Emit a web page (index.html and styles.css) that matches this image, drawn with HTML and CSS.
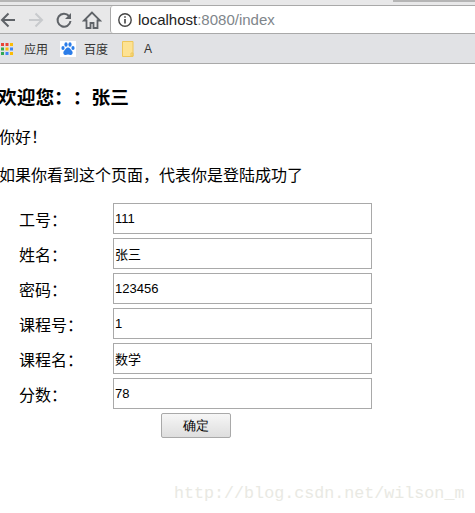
FILE: index.html
```html
<!DOCTYPE html>
<html>
  <head>
    <meta charset="utf-8">
    <title>index</title>
    <link rel="stylesheet" href="styles.css">
  </head>
  <body>
    <div class="browser">
      <div class="tabline"><span class="tab-left"></span><span class="tab-right"></span></div>
      <div class="toolbar">
        <svg class="nav" width="20" height="20" viewBox="0 0 20 20"><path d="M17 10H4M10.500 3.500L4 10l6.500 6.500" fill="none" stroke="#5f6368" stroke-width="2"/></svg>
        <svg class="nav" width="20" height="20" viewBox="0 0 20 20"><path d="M3 10h13M9.500 3.500L16 10l-6.500 6.500" fill="none" stroke="#c8cacd" stroke-width="2"/></svg>
        <svg class="nav" width="20" height="20" viewBox="0 0 20 20"><path d="M15 6A6.500 6.500 0 1 0 16.500 11" fill="none" stroke="#5f6368" stroke-width="2"/><path d="M17 3v6h-6z" fill="#5f6368"/></svg>
        <svg class="nav" width="20" height="20" viewBox="0 0 20 20"><path d="M10 2.500L2 10.500h2.500V18h4v-5h3v5h4v-7.500H18z" fill="none" stroke="#5f6368" stroke-width="1.800"/></svg>
        <div class="omnibox">
          <svg width="16" height="16" viewBox="0 0 16 16"><circle cx="8" cy="8" r="6.200" fill="none" stroke="#444" stroke-width="1.400"/><path d="M8 7v4.500M8 4.300v1.500" stroke="#444" stroke-width="1.600"/></svg>
          <span class="url">localhost<span class="url-dim">:8080/index</span></span>
        </div>
      </div>
      <div class="bookmarks">
        <svg class="apps" width="14" height="14" viewBox="0 0 14 14">
          <path d="M1 1h3v3H1z" fill="#ea4335"/><path d="M5.500 1h3v3h-3z" fill="#ea4335"/><path d="M10 1h3v3h-3z" fill="#fbbc05"/>
          <path d="M1 5.500h3v3H1z" fill="#34a853"/><path d="M5.500 5.500h3v3h-3z" fill="#fbbc05"/><path d="M10 5.500h3v3h-3z" fill="#4285f4"/>
          <path d="M1 10h3v3H1z" fill="#34a853"/><path d="M5.500 10h3v3h-3z" fill="#4285f4"/><path d="M10 10h3v3h-3z" fill="#fbbc05"/>
        </svg>
        <span class="mark mark-apps">应用</span>
        <svg class="baidu" width="16" height="16" viewBox="0 0 16 16">
          <rect width="16" height="16" fill="#fff"/>
          <ellipse cx="3" cy="7" rx="1.600" ry="2" fill="#2b7de9"/><ellipse cx="6" cy="3.500" rx="1.600" ry="2.200" fill="#2b7de9"/><ellipse cx="10" cy="3.500" rx="1.600" ry="2.200" fill="#2b7de9"/><ellipse cx="13" cy="7" rx="1.600" ry="2" fill="#2b7de9"/>
          <path d="M8 6.500c-2 0-2.500 2-4 3.500-1.300 1.500-.5 4 1.500 4 1 0 1.700-.4 2.500-.4s1.500.4 2.500.4c2 0 2.800-2.500 1.500-4C10.500 8.500 10 6.500 8 6.500z" fill="#2b7de9"/>
        </svg>
        <span class="mark mark-baidu">百度</span>
        <svg class="folder" width="12" height="16" viewBox="0 0 12 16"><path d="M.5.500h10.500v15H.5z" fill="#fde293" stroke="#eec65a"/><path d="M9 12h2v3H9z" fill="none" stroke="#eec65a"/></svg>
        <span class="mark mark-a">A</span>
      </div>
    </div>

    <div class="page">
      <h3 class="welcome">欢迎您：：张三</h3>
      <p class="line">你好！</p>
      <p class="line">如果你看到这个页面，代表你是登陆成功了</p>
      <form class="score-form">
        <label class="field-name">工号：</label>
        <input class="field" type="text" value="111">
        <label class="field-name">姓名：</label>
        <input class="field" type="text" value="张三">
        <label class="field-name">密码：</label>
        <input class="field" type="text" value="123456">
        <label class="field-name">课程号：</label>
        <input class="field" type="text" value="1">
        <label class="field-name">课程名：</label>
        <input class="field" type="text" value="数学">
        <label class="field-name">分数：</label>
        <input class="field" type="text" value="78">
        <button class="submit" type="button">确定</button>
      </form>
    </div>
    <div class="watermark">http://blog.csdn.net/wilson_m</div>
  </body>
</html>
```

FILE: styles.css
```css
html, body {
  margin: 0;
  height: 513px;
  overflow: hidden;
  background-color: #fff;
  color: #000;
  font-family: "Liberation Sans", Arial, "Noto Sans CJK SC", sans-serif;
}

.browser {
  height: 64px;
  box-sizing: border-box;
  background-color: #e1e2e5;
  border-bottom: 1px solid #a9a9a9;
}
.tabline {
  height: 6px;
  background-color: #e8e8e9;
  border-bottom: 1px solid #a9a9a9;
  box-sizing: border-box;
  display: flex;
  justify-content: space-between;
}
.tab-left {
  width: 190px;
  height: 2px;
  background-color: #b5b5b5;
}
.tab-right {
  width: 82px;
  height: 2px;
  background-color: #b5b5b5;
}
.toolbar {
  height: 28px;
  padding-left: 0;
  display: flex;
  align-items: center;
  background-color: #e8e8e9;
  border-bottom: 1px solid #a9a9a9;
  box-sizing: border-box;
}
.nav {
  flex: none;
  margin-right: 8px;
}
.toolbar .nav:first-child {
  margin-left: -2px;
}
.omnibox {
  flex: 1;
  height: 27px;
  box-sizing: border-box;
  background-color: #fff;
  border-left: 1px solid #a9a9a9;
  border-radius: 3px 0 0 3px;
  display: flex;
  align-items: center;
  padding-left: 6px;
  gap: 5px;
}
.url {
  font-size: 15px;
  color: #222;
}
.url-dim {
  color: #80868b;
}
.bookmarks {
  height: 29px;
  display: flex;
  align-items: center;
  font-size: 12px;
  color: #333;
}
.mark-apps {
  margin-left: 10px;
}
.baidu {
  margin-left: 12px;
}
.mark-baidu {
  margin-left: 8px;
}
.folder {
  margin-left: 14px;
}
.mark-a {
  margin-left: 10px;
}

.welcome {
  margin: 0 0 0 -2px;
  padding-top: 23px;
  font-size: 18.720px;
  line-height: 22px;
  font-weight: bold;
  text-spacing-trim: space-all;
}
.line {
  margin: 0 0 0 -1px;
  padding-top: 19px;
  font-size: 16px;
  line-height: 20px;
}
.line + .line {
  padding-top: 18px;
}
.score-form {
  margin-top: 17px;
  display: grid;
  grid-template-columns: 113px 259px;
  grid-auto-rows: 31px;
  row-gap: 4px;
  align-items: center;
}
.field-name {
  padding-left: 19px;
  font-size: 16px;
}
.field {
  width: 259px;
  height: 31px;
  box-sizing: border-box;
  margin: 0;
  padding: 0 1px;
  border: 1px solid #a9a9a9;
  font-size: 13px;
  font-family: "Liberation Sans", Arial, "Noto Sans CJK SC", sans-serif;
  color: #000;
}
.submit {
  grid-column: 2;
  align-self: start;
  margin-left: 48px;
  width: 70px;
  height: 25px;
  padding: 0;
  border: 1px solid #a9a9a9;
  border-radius: 2px;
  background: linear-gradient(#f6f6f6, #dedede);
  font-size: 13px;
  color: #000;
}
.watermark {
  position: absolute;
  left: 174px;
  top: 484px;
  font-family: "Liberation Mono", monospace;
  font-size: 16.700px;
  color: #e9e9e3;
  white-space: nowrap;
}
```
